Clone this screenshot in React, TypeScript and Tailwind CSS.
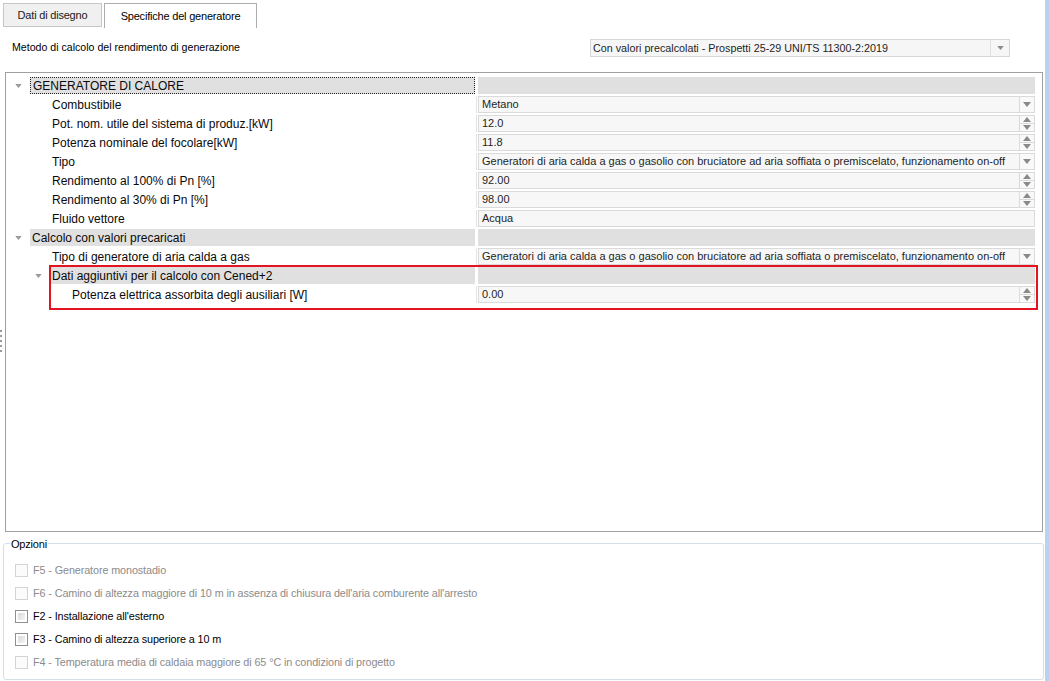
import React from "react"

type Kind = "combo" | "spin" | "text" | "none"

interface TreeRow {
  level: number
  label: string
  cat?: boolean
  focus?: boolean
  value?: string
  kind?: Kind
}

const rows: TreeRow[] = [
  { level: 0, label: "GENERATORE DI CALORE", cat: true, focus: true },
  { level: 1, label: "Combustibile", value: "Metano", kind: "combo" },
  { level: 1, label: "Pot. nom. utile del sistema di produz.[kW]", value: "12.0", kind: "spin" },
  { level: 1, label: "Potenza nominale del focolare[kW]", value: "11.8", kind: "spin" },
  {
    level: 1,
    label: "Tipo",
    value: "Generatori di aria calda a gas o gasolio con bruciatore ad aria soffiata o premiscelato, funzionamento on-off",
    kind: "combo",
  },
  { level: 1, label: "Rendimento al 100% di Pn [%]", value: "92.00", kind: "spin" },
  { level: 1, label: "Rendimento al 30% di Pn [%]", value: "98.00", kind: "spin" },
  { level: 1, label: "Fluido vettore", value: "Acqua", kind: "text" },
  { level: 0, label: "Calcolo con valori precaricati", cat: true },
  {
    level: 1,
    label: "Tipo di generatore di aria calda a gas",
    value: "Generatori di aria calda a gas o gasolio con bruciatore ad aria soffiata o premiscelato, funzionamento on-off",
    kind: "combo",
  },
  { level: 1, label: "Dati aggiuntivi per il calcolo con Cened+2", cat: true },
  { level: 2, label: "Potenza elettrica assorbita degli ausiliari [W]", value: "0.00", kind: "spin" },
]

// indent before the arrow slot, per level
const indents = ["w-0", "w-[20px]", "w-[40px]"]

const options = [
  { label: "F5 - Generatore monostadio", enabled: false },
  { label: "F6 - Camino di altezza maggiore di 10 m in assenza di chiusura dell'aria comburente all'arresto", enabled: false },
  { label: "F2 - Installazione all'esterno", enabled: true },
  { label: "F3 - Camino di altezza superiore a 10 m", enabled: true },
  { label: "F4 - Temperatura media di caldaia maggiore di 65 °C in condizioni di progetto", enabled: false },
]

function Down({ className = "" }: { className?: string }) {
  return (
    <svg width="8" height="5" viewBox="0 0 8 5" className={className}>
      <polygon points="0,0 8,0 4,5" fill="currentColor" />
    </svg>
  )
}

function Up({ className = "" }: { className?: string }) {
  return (
    <svg width="8" height="5" viewBox="0 0 8 5" className={className}>
      <polygon points="0,5 8,5 4,0" fill="currentColor" />
    </svg>
  )
}

function ValueCell({ row }: { row: TreeRow }) {
  if (row.cat) return <div className="h-[17px] w-full bg-[#e0e0e0]" />
  return (
    <div className="h-[17px] w-full flex bg-[#f7f7f7] border border-[#dadada]">
      <div className="flex-1 flex items-center pl-[3px] text-[11px] text-[#1e1e1e] whitespace-nowrap overflow-hidden">
        {row.value}
      </div>
      {row.kind === "combo" && (
        <div className="w-[15px] flex items-center justify-center border-l border-[#dadada] bg-[#f9f9f9] text-[#8a8a8a]">
          <Down />
        </div>
      )}
      {row.kind === "spin" && (
        <div className="w-[15px] flex flex-col border-l border-[#dadada] bg-[#f9f9f9] text-[#8a8a8a]">
          <div className="flex-1 flex items-center justify-center border-b border-[#dadada]">
            <Up />
          </div>
          <div className="flex-1 flex items-center justify-center">
            <Down />
          </div>
        </div>
      )}
    </div>
  )
}

function Row({ row }: { row: TreeRow }) {
  return (
    <div className="h-[19px] flex items-center">
      <div className="w-[472px] h-[17px] flex">
        <div className={indents[row.level]} />
        <div className="w-[24px] flex items-center justify-center text-[#9a9a9a]">
          {row.cat && <Down className="w-[7px] h-[4px]" />}
        </div>
        {row.cat ? (
          <div
            className={`flex-1 mr-[3px] flex items-center pl-[2px] bg-[#e0e0e0] text-[12px] text-[#0a0a0a] ${
              row.focus ? "border border-dotted border-[#222]" : ""
            }`}
          >
            {row.label}
          </div>
        ) : (
          <div className="flex-1 mr-[1px] flex items-center pl-[2px] border-r border-[#e4e4e4] text-[12px] text-[#0a0a0a]">
            {row.label}
          </div>
        )}
      </div>
      <div className="w-[557px]">
        <ValueCell row={row} />
      </div>
    </div>
  )
}

export default function App() {
  return (
    <div className="relative w-[1049px] h-[681px] flex bg-white overflow-hidden font-['Liberation_Sans',Arial,sans-serif] text-[11px] text-black">
      <div className="w-[1045px] flex flex-col">
        {/* Tabs */}
        <div className="h-[28px] pt-[3px] pl-[3px] flex items-start">
          <div className="h-[24px] w-[99px] flex items-center justify-center bg-[#f0f0f0] border border-[#c6c6c6] tracking-[-0.2px] text-[#1a1a1a]">
            Dati di disegno
          </div>
          <div className="ml-[2px] h-[25px] w-[153px] flex items-center justify-center bg-white border border-b-0 border-[#adadad] tracking-[-0.2px]">
            Specifiche del generatore
          </div>
        </div>

        {/* Metodo */}
        <div className="mt-[11px] h-[18px] flex items-center">
          <div className="pl-[12px] text-[10.6px]">Metodo di calcolo del rendimento di generazione</div>
          <div className="ml-auto mr-[35px] w-[420px] h-[18px] flex bg-[#f6f6f6] border border-[#d6d6d6]">
            <div className="flex-1 flex items-center pl-[2px] text-[10.75px] text-[#1e1e1e]">
              Con valori precalcolati - Prospetti 25-29 UNI/TS 11300-2:2019
            </div>
            <div className="w-[19px] flex items-center justify-center border-l border-[#e2e2e2] text-[#8a8a8a]">
              <Down className="w-[7px] h-[4px]" />
            </div>
          </div>
        </div>

        {/* Property tree */}
        <div className="relative mt-[15px] ml-[5px] w-[1038px] h-[460px] border border-[#a0a0a0] pt-[3px]">
          {rows.map((r, i) => (
            <Row key={i} row={r} />
          ))}
          <div className="absolute left-[43px] top-[192px] w-[989px] h-[45px] border-2 border-[#e3141f]" />
        </div>

        {/* Opzioni */}
        <div className="relative mt-[11px] ml-[3px] w-[1041px] h-[137px] border border-[#d5dfe6] rounded-[3px] pt-[15px]">
          <div className="absolute left-[6px] top-[-8px] bg-white px-[1px] text-[11px] tracking-[-0.2px]">Opzioni</div>
          <div className="flex flex-col pl-[11px]">
            {options.map((o, i) => (
              <div key={i} className="h-[23px] flex items-center gap-[5px]">
                {o.enabled ? (
                  <div className="w-[13px] h-[13px] border border-[#8e8f8f] bg-white p-[2px]">
                    <div className="w-full h-full bg-gradient-to-br from-[#d9d9d9] to-[#f4f4f4]" />
                  </div>
                ) : (
                  <div className="w-[13px] h-[13px] border border-[#d4d4d4] bg-[#fbfbfb]" />
                )}
                <span className={`text-[10.8px] tracking-[-0.1px] ${o.enabled ? "text-black" : "text-[#8b8b8b]"}`}>{o.label}</span>
              </div>
            ))}
          </div>
        </div>
      </div>

      {/* right edge strip */}
      <div className="w-[4px] h-full bg-[#b9d2ef]" />

      {/* splitter grip */}
      <div className="absolute left-0 top-[330px] flex flex-col gap-[3px]">
        <div className="w-[2px] h-[2px] bg-[#9a9a9a]" />
        <div className="w-[2px] h-[2px] bg-[#9a9a9a]" />
        <div className="w-[2px] h-[2px] bg-[#9a9a9a]" />
        <div className="w-[2px] h-[2px] bg-[#9a9a9a]" />
        <div className="w-[2px] h-[2px] bg-[#9a9a9a]" />
      </div>
    </div>
  )
}
